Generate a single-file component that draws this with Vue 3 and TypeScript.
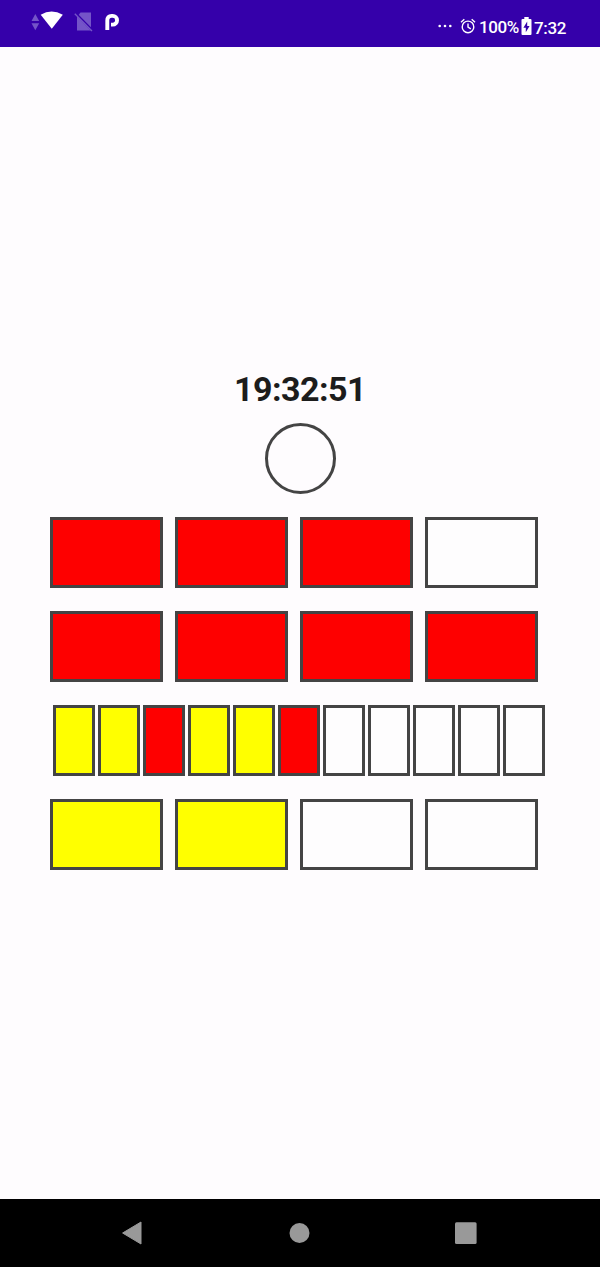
<script setup lang="ts">
type Lamp = 'red' | 'yellow' | 'off'

interface LampRow {
  id: string
  narrow: boolean
  lamps: Lamp[]
}

const time = '19:32:51'

const rows: LampRow[] = [
  { id: 'five-hours', narrow: false, lamps: ['red', 'red', 'red', 'off'] },
  { id: 'hours', narrow: false, lamps: ['red', 'red', 'red', 'red'] },
  {
    id: 'five-minutes',
    narrow: true,
    lamps: ['yellow', 'yellow', 'red', 'yellow', 'yellow', 'red', 'off', 'off', 'off', 'off', 'off'],
  },
  { id: 'minutes', narrow: false, lamps: ['yellow', 'yellow', 'off', 'off'] },
]
</script>

<template>
  <div class="screen">
    <header class="status">
      <svg class="notifications" width="90" height="24" viewBox="0 0 90 24">
        <path d="M1.5 11 5.3 4 9.2 11ZM1.5 13.2 5.3 20.2 9.2 13.2Z" fill="#7454c8" />
        <path d="M10.7 4.8Q21.5-2 32.8 4.8L21.8 18.8Z" fill="#fff" />
        <path d="M50.5 2.5H61V20.5H47V7Z" fill="#7454c8" />
        <path d="M46.3 4 62.8 20.8" stroke="#3500aa" stroke-width="2.4" />
        <path d="M44.8 3.8 62 21" stroke="#7454c8" stroke-width="1.3" />
        <path
          d="M77.3 20V10.6Q77.3 5.9 81.6 5.9H82.7A4.3 4.3 0 0 1 82.7 14.6H81"
          fill="none"
          stroke="#fff"
          stroke-width="3.9"
        />
      </svg>
      <div class="indicators">
        <svg class="dots" width="14" height="4" viewBox="0 0 14 4">
          <circle cx="1.7" cy="2" r="1.3" />
          <circle cx="7" cy="2" r="1.3" />
          <circle cx="12.3" cy="2" r="1.3" />
        </svg>
        <svg class="alarm" width="16" height="16" viewBox="0 0 16 16">
          <circle cx="8" cy="8.9" r="5.8" />
          <path d="M1 4.2 4.3 1.2M11.7 1.2 15 4.2M8 5.4V9.2L10.8 10.9" />
        </svg>
        <span class="percent">100%</span>
        <svg class="battery" width="11" height="18" viewBox="0 0 11 18">
          <path d="M3.3 0H7.7V2H9.5Q10.5 2 10.5 3V17Q10.5 18 9.5 18H1.5Q.5 18 .5 17V3Q.5 2 1.5 2H3.3Z" fill="#fff" />
          <path d="M6.2 4.5 2.4 10.8H4.8V15.3L8.6 8.9H6.2Z" fill="#3500aa" />
        </svg>
        <span class="clock">7:32</span>
      </div>
    </header>

    <main class="content">
      <h1 class="time">{{ time }}</h1>
      <div class="seconds"></div>
      <section class="rows">
        <div v-for="row in rows" :key="row.id" class="row" :class="{ narrow: row.narrow }">
          <div v-for="(lamp, i) in row.lamps" :key="i" class="lamp" :class="lamp"></div>
        </div>
      </section>
    </main>

    <nav class="navbar">
      <svg width="22" height="24" viewBox="0 0 22 24">
        <path d="M1.6 12 20 1V23Z" stroke-width="1" stroke-linejoin="round" />
      </svg>
      <svg width="22" height="24" viewBox="0 0 22 24"><circle cx="11.5" cy="12" r="10" /></svg>
      <svg width="22" height="24" viewBox="0 0 22 24"><rect x="0" y="1.3" width="21.6" height="21.6" rx="1.5" /></svg>
    </nav>
  </div>
</template>

<style>
body {
  margin: 0;
}
</style>

<style scoped>
.screen {
  display: flex;
  flex-direction: column;
  width: 600px;
  height: 1267px;
  overflow: hidden;
  background: #fefcfe;
  font-family: Roboto, "Liberation Sans", sans-serif;
}

.status {
  display: flex;
  justify-content: space-between;
  box-sizing: border-box;
  height: 47px;
  padding: 10px 34px 0 30px;
  background: #3500aa;
  color: #fff;
}

.indicators {
  display: flex;
  align-items: flex-start;
  font-size: 17px;
  font-weight: 500;
  line-height: 20px;
}

.dots {
  margin: 13.5px 8px 0 0;
  fill: #fff;
}

.alarm {
  margin: 7.5px 3px 0 0;
  fill: none;
  stroke: #fff;
  stroke-width: 1.4;
}

.percent {
  width: 42px;
  margin-top: 7px;
  letter-spacing: -0.4px;
}

.battery {
  margin-top: 7px;
}

.clock {
  width: 32px;
  margin: 8px 0 0 2px;
  letter-spacing: -0.35px;
}

.content {
  display: flex;
  flex: 1;
  flex-direction: column;
  align-items: center;
}

.time {
  margin: 322px 0 0;
  color: #1c1c1c;
  font-size: 34px;
  font-weight: 700;
  letter-spacing: -0.5px;
  line-height: 40px;
}

.seconds {
  box-sizing: border-box;
  width: 71px;
  height: 71px;
  margin: 13.5px 0 23.5px;
  border: 3px solid #444;
  border-radius: 50%;
}

.rows {
  display: flex;
  flex-direction: column;
  align-self: stretch;
  gap: 23.3px;
  padding-left: 50px;
}

.row {
  display: flex;
  gap: 12px;
}

.row.narrow {
  gap: 3px;
  padding-left: 2.5px;
}

.lamp {
  box-sizing: border-box;
  width: 113px;
  height: 70.8px;
  border: 3px solid #444;
}

.narrow .lamp {
  width: 42px;
}

.red {
  background: #fe0000;
}

.yellow {
  background: #ff0;
}

.off {
  background: #fefdfe;
}

.navbar {
  display: flex;
  align-items: center;
  justify-content: space-between;
  box-sizing: border-box;
  height: 68.5px;
  padding: 0 123px 0 121px;
  background: #000;
}

.navbar svg {
  fill: #999;
  stroke: #999;
  stroke-width: 0;
}
</style>
